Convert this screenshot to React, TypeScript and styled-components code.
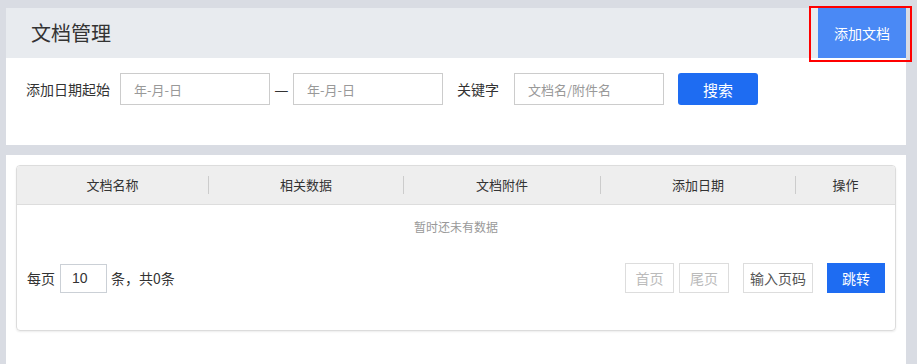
import React from "react"
import styled, { createGlobalStyle } from "styled-components"

const GlobalStyle = createGlobalStyle`
  html, body {
    margin: 0;
    padding: 0;
    background: #d9dce3;
    font-family: "Microsoft YaHei", "Noto Sans CJK SC", "Noto Sans", sans-serif;
    color: #333333;
  }
  * { box-sizing: border-box; }
`

const Page = styled.div`
  width: 900px;
  margin-left: 6px;
  padding-top: 8px;
  display: flex;
  flex-direction: column;
  gap: 10px;
`

const Panel = styled.section<{ $grow?: boolean }>`
  position: relative;
  background: #ffffff;
  min-height: ${(p) => (p.$grow ? "209px" : "auto")};
`

const HeaderBar = styled.div`
  height: 50px;
  background: #e8ebef;
  display: flex;
  align-items: center;
  justify-content: space-between;
  padding-left: 25px;
`

const Title = styled.h1`
  margin: 0;
  font-size: 20px;
  font-weight: normal;
  color: #333333;
  line-height: 1;
`

const AddButton = styled.button`
  height: 50px;
  width: 88px;
  border: none;
  background: #4a89f5;
  color: #ffffff;
  font-family: inherit;
  font-size: 14px;
  cursor: pointer;
  padding: 0;
`

const Highlight = styled.div`
  position: absolute;
  left: 803px;
  top: -2px;
  width: 103px;
  height: 56px;
  border: 2px solid #ff0000;
  pointer-events: none;
`

const FilterRow = styled.div`
  display: flex;
  align-items: center;
  padding: 15px 0 40px 20px;
`

const Label = styled.span<{ $gap: number; $lead?: number }>`
  font-size: 14px;
  color: #333333;
  margin-left: ${(p) => p.$lead ?? 0}px;
  margin-right: ${(p) => p.$gap}px;
  line-height: 1;
`

const TextInput = styled.input`
  width: 150px;
  height: 32px;
  border: 1px solid #cccccc;
  padding: 0 13px;
  font-family: inherit;
  font-size: 13px;
  color: #333333;
  outline: none;
  &::placeholder {
    color: #999999;
  }
`

const Dash = styled.span`
  width: 23px;
  text-align: center;
  font-size: 16px;
  color: #333333;
`

const SearchButton = styled.button`
  margin-left: 14px;
  width: 80px;
  height: 32px;
  border: none;
  border-radius: 3px;
  background: #1e6cf2;
  color: #ffffff;
  font-family: inherit;
  font-size: 15px;
  cursor: pointer;
`

const Table = styled.div`
  margin: 10px;
  border: 1px solid #dcdcdc;
  border-radius: 4px;
  box-shadow: 0 1px 2px rgba(0, 0, 0, 0.08);
  overflow: hidden;
`

const HeadRow = styled.div`
  display: grid;
  grid-template-columns: 191px 195px 197px 195px 1fr;
  height: 39px;
  align-items: center;
  background: #eeeeee;
  border-bottom: 1px solid #dddddd;
`

const HeadCell = styled.div<{ $first?: boolean }>`
  text-align: center;
  font-size: 13px;
  color: #333333;
  line-height: 18px;
  border-left: ${(p) => (p.$first ? "none" : "1px solid #cccccc")};
`

const Empty = styled.div`
  height: 43px;
  display: flex;
  align-items: center;
  justify-content: center;
  font-size: 12px;
  color: #999999;
`

const Pager = styled.div`
  display: flex;
  align-items: center;
  justify-content: space-between;
  padding: 15px 10px 37px 10px;
`

const PagerLeft = styled.div`
  display: flex;
  align-items: center;
  font-size: 14px;
  color: #333333;
`

const SizeInput = styled.input`
  width: 47px;
  height: 29px;
  margin: 0 4px 0 5px;
  border: 1px solid #cbd0d6;
  padding: 0 0 0 11px;
  font-family: "Liberation Sans", Arial, sans-serif;
  font-size: 14px;
  color: #333333;
  outline: none;
`

const PagerRight = styled.div`
  display: flex;
  align-items: center;
`

const PageButton = styled.button<{ $width: number; $gap: number; $disabled?: boolean }>`
  width: ${(p) => p.$width}px;
  height: 30px;
  margin-left: ${(p) => p.$gap}px;
  border: 1px solid #dddddd;
  background: #ffffff;
  color: ${(p) => (p.$disabled ? "#bbbbbb" : "#555555")};
  font-family: inherit;
  font-size: 14px;
  padding: 0;
  cursor: pointer;
`

const JumpButton = styled.button`
  width: 58px;
  height: 30px;
  margin-left: 14px;
  border: none;
  background: #1e6cf2;
  color: #ffffff;
  font-family: inherit;
  font-size: 14px;
  padding: 0;
  cursor: pointer;
`

const columns = ["文档名称", "相关数据", "文档附件", "添加日期", "操作"]

export default function App() {
  return (
    <>
      <GlobalStyle />
      <Page>
        <Panel>
          <HeaderBar>
            <Title>文档管理</Title>
            <AddButton>添加文档</AddButton>
          </HeaderBar>
          <Highlight />
          <FilterRow>
            <Label $gap={10}>添加日期起始</Label>
            <TextInput placeholder="年-月-日" />
            <Dash>—</Dash>
            <TextInput placeholder="年-月-日" />
            <Label $lead={14} $gap={15}>关键字</Label>
            <TextInput placeholder="文档名/附件名" />
            <SearchButton>搜索</SearchButton>
          </FilterRow>
        </Panel>
        <Panel $grow>
          <Table>
            <HeadRow>
              {columns.map((c, i) => (
                <HeadCell key={c} $first={i === 0}>
                  {c}
                </HeadCell>
              ))}
            </HeadRow>
            <Empty>暂时还未有数据</Empty>
            <Pager>
              <PagerLeft>
                每页
                <SizeInput defaultValue="10" />
                条，共0条
              </PagerLeft>
              <PagerRight>
                <PageButton $width={49} $gap={0} $disabled>首页</PageButton>
                <PageButton $width={50} $gap={5} $disabled>尾页</PageButton>
                <PageButton $width={70} $gap={14}>输入页码</PageButton>
                <JumpButton>跳转</JumpButton>
              </PagerRight>
            </Pager>
          </Table>
        </Panel>
      </Page>
    </>
  )
}
